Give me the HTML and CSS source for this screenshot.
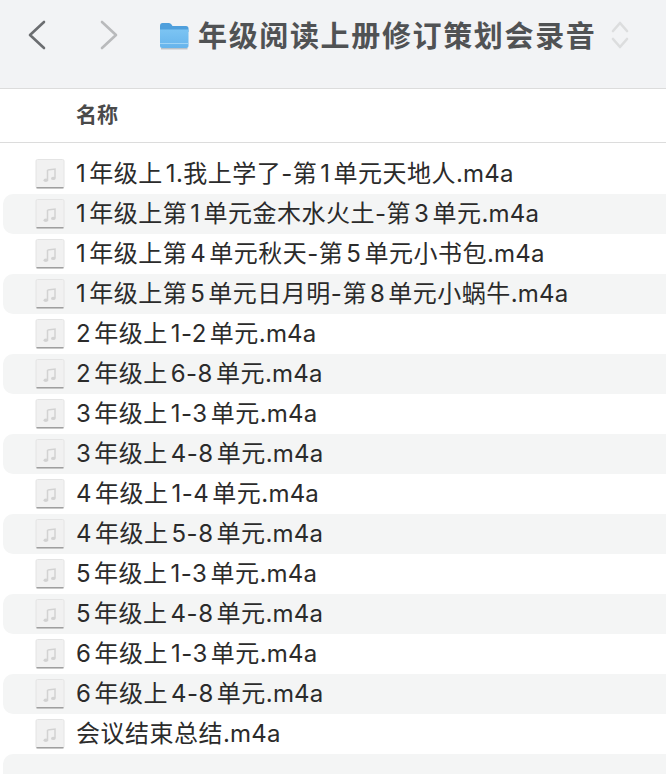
FILE: index.html
```html
<!DOCTYPE html>
<html lang="zh-CN">
<head>
  <meta charset="UTF-8" />
  <title>年级阅读上册修订策划会录音</title>
  <link rel="stylesheet" href="styles.css">
</head>
<body>
  <svg width="0" height="0" class="defs">
    <defs>
      <linearGradient id="folderBody" x1="0" y1="0" x2="0" y2="1">
        <stop offset="0" stop-color="#7cc4f3"/>
        <stop offset="1" stop-color="#66b4ec"/>
      </linearGradient>
      <symbol id="audioIcon" viewBox="0 0 30 30">
        <rect x="1" y="0.5" width="28" height="28.5" rx="1.5" fill="#f1f1f1" stroke="#e4e4e4"/>
        <path d="M1.5 28.8h27" stroke="#8c8c8c" stroke-width="1.2"/>
        <path d="M12.500 11 L20 10 V19 M12.500 11 V21" fill="none" stroke="#d2d2d2" stroke-width="1.5"/>
        <ellipse cx="10.800" cy="21.300" rx="2.300" ry="1.700" fill="#d2d2d2"/>
        <ellipse cx="18.300" cy="19.400" rx="2.300" ry="1.700" fill="#d2d2d2"/>
      </symbol>
    </defs>
  </svg>

  <header class="toolbar">
    <svg class="nav-arrow" width="20" height="30" viewBox="0 0 20 30"><path d="M17 2 L3 15 L17 28" fill="none" stroke="#6b6d70" stroke-width="2.6" stroke-linecap="round" stroke-linejoin="round"/></svg>
    <svg class="nav-arrow forward" width="20" height="30" viewBox="0 0 20 30"><path d="M3 2 L17 15 L3 28" fill="none" stroke="#b9babc" stroke-width="2.6" stroke-linecap="round" stroke-linejoin="round"/></svg>
    <svg class="folder" width="30" height="30" viewBox="0 0 30 30">
      <path d="M1 6 Q1 3 3.5 3 H10 Q11.500 3 12.500 4.500 L13.500 6 H27 Q29.500 6 29.500 8.500 V12 H1 Z" fill="#4f9fdc"/>
      <path d="M1 9.500 H29.500 V26 Q29.500 28 27.500 28 H3 Q1 28 1 26 Z" fill="url(#folderBody)"/>
      <path d="M1 23.500 H29.500" stroke="#9fd4f6" stroke-width="1"/>
      <path d="M2 28.800 H28.500" stroke="#8f9aa3" stroke-width="0.8"/>
    </svg>
    <h1 class="title">年级阅读上册修订策划会录音</h1>
    <svg class="stepper" width="18" height="30" viewBox="0 0 18 30"><path d="M2 11 L9 3 L16 11 M2 19 L9 27 L16 19" fill="none" stroke="#dcddde" stroke-width="2.6" stroke-linecap="round" stroke-linejoin="round"/></svg>
  </header>

  <div class="col-head"><span class="col-name">名称</span></div>

  <ul class="files">
    <li class="file"><svg class="file-icon"><use href="#audioIcon"/></svg><span class="file-name">1年级上1<span class="tight">.</span>我上学了-第1单元天地人<span class="tight">.m4a</span></span></li>
    <li class="file"><svg class="file-icon"><use href="#audioIcon"/></svg><span class="file-name">1年级上第1单元金木水火土-第3单元<span class="tight">.m4a</span></span></li>
    <li class="file"><svg class="file-icon"><use href="#audioIcon"/></svg><span class="file-name">1年级上第4单元秋天-第5单元小书包<span class="tight">.m4a</span></span></li>
    <li class="file"><svg class="file-icon"><use href="#audioIcon"/></svg><span class="file-name">1年级上第5单元日月明-第8单元小蜗牛<span class="tight">.m4a</span></span></li>
    <li class="file"><svg class="file-icon"><use href="#audioIcon"/></svg><span class="file-name">2年级上1-2单元<span class="tight">.m4a</span></span></li>
    <li class="file"><svg class="file-icon"><use href="#audioIcon"/></svg><span class="file-name">2年级上6-8单元<span class="tight">.m4a</span></span></li>
    <li class="file"><svg class="file-icon"><use href="#audioIcon"/></svg><span class="file-name">3年级上1-3单元<span class="tight">.m4a</span></span></li>
    <li class="file"><svg class="file-icon"><use href="#audioIcon"/></svg><span class="file-name">3年级上4-8单元<span class="tight">.m4a</span></span></li>
    <li class="file"><svg class="file-icon"><use href="#audioIcon"/></svg><span class="file-name">4年级上1-4单元<span class="tight">.m4a</span></span></li>
    <li class="file"><svg class="file-icon"><use href="#audioIcon"/></svg><span class="file-name">4年级上5-8单元<span class="tight">.m4a</span></span></li>
    <li class="file"><svg class="file-icon"><use href="#audioIcon"/></svg><span class="file-name">5年级上1-3单元<span class="tight">.m4a</span></span></li>
    <li class="file"><svg class="file-icon"><use href="#audioIcon"/></svg><span class="file-name">5年级上4-8单元<span class="tight">.m4a</span></span></li>
    <li class="file"><svg class="file-icon"><use href="#audioIcon"/></svg><span class="file-name">6年级上1-3单元<span class="tight">.m4a</span></span></li>
    <li class="file"><svg class="file-icon"><use href="#audioIcon"/></svg><span class="file-name">6年级上4-8单元<span class="tight">.m4a</span></span></li>
    <li class="file"><svg class="file-icon"><use href="#audioIcon"/></svg><span class="file-name">会议结束总结<span class="tight">.m4a</span></span></li>
    <li class="file"></li>
  </ul>
</body>
</html>
```

FILE: styles.css
```css
html, body {
  margin: 0;
  padding: 0;
  height: 100%;
  overflow: hidden;
  background: #fff;
  font-family: "Inter", "Noto Sans CJK SC", sans-serif;
}

.defs {
  display: block;
  height: 0;
}

.toolbar {
  display: flex;
  align-items: center;
  height: 89px;
  padding: 0 0 18px 27px;
  box-sizing: border-box;
  background: #f2f3f5;
  border-bottom: 1px solid #dcdcdc;
}

.forward {
  margin-left: 52px;
}

.folder {
  margin-left: 40px;
}

.title {
  margin: 0 0 2px 9px;
  font-size: 29px;
  font-weight: 700;
  letter-spacing: 1.65px;
  color: #505254;
  white-space: nowrap;
}

.stepper {
  margin-left: 15px;
}

.col-head {
  display: flex;
  align-items: center;
  height: 54px;
  box-sizing: border-box;
  padding: 0 0 5px 76px;
  border-bottom: 1px solid #dcdcdc;
}

.col-name {
  font-size: 21px;
  font-weight: 700;
  color: #4a4a4a;
}

.files {
  list-style: none;
  margin: 0;
  padding: 11px 0 0 3px;
}

.file {
  display: flex;
  align-items: center;
  height: 40px;
  box-sizing: border-box;
  padding: 0 0 0 32px;
  font-size: 24px;
  letter-spacing: 0.5px;
  text-autospace: normal;
  color: #2b2b2b;
  white-space: nowrap;
}

.file-name {
  margin-bottom: 6px;
}

.tight {
  text-autospace: no-autospace;
  letter-spacing: 0.2px;
}

.file:nth-child(even) {
  background: #f4f5f5;
  border-radius: 10px 0 0 10px;
}

.file-icon {
  flex: none;
  width: 30px;
  height: 30px;
  margin-right: 11px;
}
```
